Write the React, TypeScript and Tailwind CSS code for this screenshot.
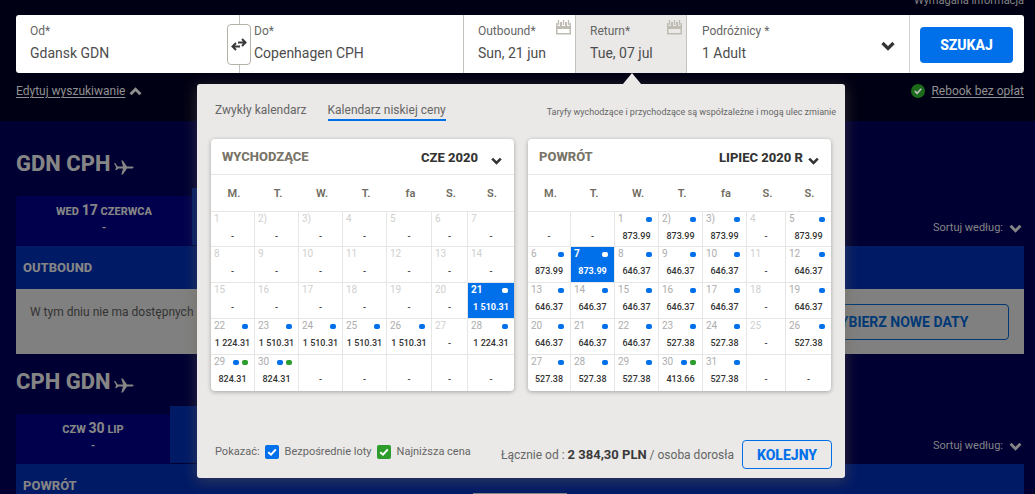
import React from "react";

type Day = { day?: string; price?: string; direct?: boolean; lowest?: boolean; selected?: boolean };

const d = (day: string, price: string): Day => ({ day, price, direct: true });
const n = (day: string): Day => ({ day });
const blank: Day = {};

const outboundWeeks: Day[][] = [
  [n("1"), n("2)"), n("3)"), n("4"), n("5"), n("6"), n("7")],
  [n("8"), n("9"), n("10"), n("11"), n("12"), n("13"), n("14")],
  [n("15"), n("16"), n("17"), n("18"), n("19"), n("20"), { ...d("21", "1 510.31"), selected: true }],
  [d("22", "1 224.31"), d("23", "1 510.31"), d("24", "1 510.31"), d("25", "1 510.31"), d("26", "1 510.31"), n("27"), d("28", "1 224.31")],
  [{ ...d("29", "824.31"), lowest: true }, { ...d("30", "824.31"), lowest: true }, blank, blank, blank, blank, blank],
];

const returnWeeks: Day[][] = [
  [blank, blank, d("1", "873.99"), d("2)", "873.99"), d("3)", "873.99"), n("4"), d("5", "873.99")],
  [d("6", "873.99"), { ...d("7", "873.99"), selected: true }, d("8", "646.37"), d("9", "646.37"), d("10", "646.37"), n("11"), d("12", "646.37")],
  [d("13", "646.37"), d("14", "646.37"), d("15", "646.37"), d("16", "646.37"), d("17", "646.37"), n("18"), d("19", "646.37")],
  [d("20", "646.37"), d("21", "646.37"), d("22", "646.37"), d("23", "527.38"), d("24", "527.38"), n("25"), d("26", "527.38")],
  [d("27", "527.38"), d("28", "527.38"), d("29", "527.38"), { ...d("30", "413.66"), lowest: true }, d("31", "527.38"), blank, blank],
];

const weekdays = ["M.", "T.", "W.", "T.", "fa", "S.", "S."];

function Chevron({ className = "", up = false }: { className?: string; up?: boolean }) {
  return (
    <svg viewBox="0 0 14 10" className={className} fill="none" stroke="currentColor" strokeWidth="3.2" aria-hidden="true">
      <path d={up ? "M1.5 8 7 2.6 12.5 8" : "M1.5 2 7 7.4 12.5 2"} />
    </svg>
  );
}

function Check({ className = "" }: { className?: string }) {
  return (
    <svg viewBox="0 0 14 14" className={className} fill="none" stroke="currentColor" strokeWidth="2" aria-hidden="true">
      <path d="M3.2 7.2 6 9.6 10.8 4.4" />
    </svg>
  );
}

function CalendarIcon() {
  return (
    <svg viewBox="0 0 15 15" className="absolute top-[5px] right-1 size-[15px]" aria-hidden="true">
      <path fill="#bfbcb4" d="M0 3h1.500v3.500h12V3H15v11.500H0zM1.500 9v4h12V9z" fillRule="evenodd" />
      <path fill="#bfbcb4" d="M1.800 0h1.400v5H1.800zM6.800 0h1.400v5H6.800zM11.800 0h1.400v5h-1.400zM4 2h2v4H4zM9 2h2v4H9zM0 6h15v3H0z" />
    </svg>
  );
}

function Plane() {
  return (
    <svg viewBox="0 0 20 15" className="h-[15px] w-5" fill="currentColor" aria-hidden="true">
      <path d="M0 3h1.300L3.600 6.400H9L7.300.4h1.500l4.200 6H17.500c1.200 0 2 .4 2 1s-.8 1-2 1H13l-4.200 6H7.300L9 8.400H4.500L2.600 10H1.200l.9-2.800z" />
    </svg>
  );
}

function SwapIcon() {
  return (
    <svg viewBox="0 0 16 13" className="h-[13px] w-4" fill="none" stroke="#3a3a3a" strokeWidth="2" aria-hidden="true">
      <path d="M7 4.500h7.500M11 1l3.500 3.500L11 8M9 8.500H1.500M5 5 1.500 8.500 5 12" />
    </svg>
  );
}

function Field({ id, label, value }: { id: string; label: string; value: string }) {
  return (
    <>
      <label htmlFor={id} className="text-xs leading-4 text-[#666]">{label}</label>
      <input id={id} defaultValue={value} className="mt-1 w-full min-w-0 bg-transparent text-sm leading-5 text-[#4d4d4d] outline-none" />
    </>
  );
}

function SearchBar() {
  return (
    <form className="relative grid h-[58px] grid-cols-[224fr_224fr_112fr_111fr_223fr_114fr] rounded-[3px] bg-white" onSubmit={(e) => e.preventDefault()}>
      <div className="relative flex flex-col border-r border-[#c4c2bd] py-2 pr-4 pl-3.5">
        <Field id="from" label="Od*" value="Gdansk GDN" />
        <button type="button" aria-label="Zamień" className="absolute top-[9px] -right-3 z-10 grid h-[41px] w-6 place-items-center rounded-[4px] border border-[#b5b2aa] bg-white">
          <SwapIcon />
        </button>
      </div>
      <div className="flex flex-col border-r border-[#c4c2bd] py-2 pl-3.5">
        <Field id="to" label="Do*" value="Copenhagen CPH" />
      </div>
      <div className="relative flex flex-col border-r border-[#c4c2bd] py-2 pl-3.5">
        <Field id="outbound" label="Outbound*" value="Sun, 21 jun" />
        <CalendarIcon />
      </div>
      <div className="relative flex flex-col border-r border-[#c4c2bd] bg-[#eae9e7] py-2 pl-3.5">
        <Field id="return" label="Return*" value="Tue, 07 jul" />
        <CalendarIcon />
      </div>
      <div className="relative flex flex-col border-r border-[#d4d2ce] py-2 pl-[15px]">
        <label htmlFor="pax" className="text-xs leading-4 text-[#666]">Podróżnicy *</label>
        <select id="pax" className="mt-1 appearance-none bg-transparent text-sm leading-5 text-[#4d4d4d] outline-none">
          <option>1 Adult</option>
        </select>
        <Chevron className="pointer-events-none absolute top-[26px] right-3.5 h-[10px] w-3.5 text-[#333]" />
      </div>
      <div className="flex items-center pt-0.5 pr-[11px] pl-[10px]">
        <button className="h-9 w-full rounded-[4px] bg-[#0070ea] text-sm font-extrabold text-white">SZUKAJ</button>
      </div>
    </form>
  );
}

function DayCell({ cell }: { cell: Day }) {
  const { day, price, direct, lowest, selected } = cell;
  const dayColor = selected ? "text-white font-bold" : direct ? "text-[#adadad]" : "text-[#cfcfcf]";
  return (
    <td className={`border-t border-r border-[#e6e6e6] p-0 align-top last:border-r-0 ${selected ? "bg-[#0070ea]" : ""}`}>
      <div className="flex h-3.5 items-center gap-[3px] pr-1.5 pl-[3px]">
        <span className={`mr-auto text-[10px] leading-3 ${dayColor}`}>{day}</span>
        {direct && <span className={`h-[5px] w-1.5 rounded-[2px] ${selected ? "bg-white" : "bg-[#0070ea]"}`} />}
        {lowest && <span className="h-[5px] w-1.5 rounded-[2px] bg-[#2d9d2d]" />}
      </div>
      <div className={`mt-[3px] text-center text-[9px] leading-[14px] whitespace-nowrap ${selected ? "font-bold text-white" : "font-medium text-[#333]"}`}>
        {price ?? "-"}
      </div>
    </td>
  );
}

type MonthProps = { title: string; month: string; weeks: Day[][]; cols: number[]; selectPad: string };

function Month({ title, month, weeks, cols, selectPad }: MonthProps) {
  const total = cols.reduce((a, b) => a + b, 0);
  return (
    <section className="min-w-0 flex-1 overflow-hidden rounded-[4px] bg-white shadow-[0_1px_4px_rgba(0,0,0,0.3)]">
      <header className="flex h-[35px] items-center justify-between pr-3 pl-[11px]">
        <h3 className="text-[13px] leading-4 font-extrabold text-[#787468]">{title}</h3>
        <div className="relative">
          <select aria-label={title} className={`appearance-none bg-transparent text-[13px] leading-4 font-extrabold text-[#333] outline-none ${selectPad}`}>
            <option>{month}</option>
          </select>
          <Chevron className="pointer-events-none absolute right-0 bottom-1 h-2 w-[11px] text-[#333]" />
        </div>
      </header>
      <table className="w-full table-fixed border-separate border-spacing-0">
        <colgroup>
          {cols.map((c, i) => (
            <col key={i} style={{ width: `${(c / total) * 100}%` }} />
          ))}
        </colgroup>
        <thead>
          <tr className="h-[37px]">
            {weekdays.map((w, i) => (
              <th key={i} scope="col" className="border-t border-[#e6e6e6] p-0 pt-0.5 pl-0.5 text-[11px] leading-4 font-semibold text-[#706c62]">{w}</th>
            ))}
          </tr>
        </thead>
        <tbody>
          {weeks.map((week, i) => (
            <tr key={i} className="h-9 first:h-[35px] last:h-[37px]">
              {week.map((cell, j) => (
                <DayCell key={j} cell={cell} />
              ))}
            </tr>
          ))}
        </tbody>
      </table>
    </section>
  );
}

function Filter({ label, color }: { label: string; color: string }) {
  return (
    <label className="flex items-center gap-1.5 text-[11px] leading-4">
      <span className="grid size-3.5 text-white">
        <input type="checkbox" defaultChecked className={`col-start-1 row-start-1 size-3.5 appearance-none rounded-[2px] ${color}`} />
        <Check className="pointer-events-none col-start-1 row-start-1 size-3.5" />
      </span>
      {label}
    </label>
  );
}

function CalendarPopover() {
  return (
    <div className="absolute top-[69px] left-[181px] z-20 flex h-[394px] w-[648px] flex-col rounded-[3px] bg-[#eae9e7] text-[#666] shadow-[0_3px_14px_1px_rgba(110,100,80,0.4)]">
      <svg viewBox="0 0 18 11" className="absolute -top-[11px] left-[426px] h-[11px] w-[18px]" aria-hidden="true">
        <path d="M9 0 18 11H0z" fill="#eae9e7" />
      </svg>
      <div className="flex h-[55px] items-center pr-[9px] pl-[18px]">
        <nav className="flex gap-[21px] text-xs leading-4">
          <a href="#zwykly" className="pb-px">Zwykły kalendarz</a>
          <a href="#niska-cena" className="border-b-2 border-[#0070ea] pb-px">Kalendarz niskiej ceny</a>
        </nav>
        <p className="ml-auto text-[9px] leading-4">Taryfy wychodzące i przychodzące są współzależne i mogą ulec zmianie</p>
      </div>
      <div className="flex gap-3.5 px-3.5">
        <Month title="WYCHODZĄCE" month="CZE 2020" weeks={outboundWeeks} cols={[44, 44, 44, 44, 45, 36, 46]} selectPad="pr-6" />
        <Month title="POWRÓT" month="LIPIEC 2020 R" weeks={returnWeeks} cols={[43, 44, 44, 44, 44, 39, 45]} selectPad="pr-4" />
      </div>
      <footer className="mt-auto flex items-center pr-[13px] pb-[9px] pl-[18px]">
        <div className="flex items-center gap-[5px] pb-1.5">
          <span className="text-[11px] leading-4">Pokazać:</span>
          <Filter label="Bezpośrednie loty" color="bg-[#0070ea]" />
          <Filter label="Najniższa cena" color="bg-[#2d9d2d]" />
        </div>
        <p className="ml-auto text-xs leading-4">
          Łącznie od : <strong className="text-[13px] font-bold text-[#3a3a3a]">2 384,30 PLN</strong> / osoba dorosła
        </p>
        <button className="ml-2 h-[29px] w-[90px] rounded-[4px] border border-[#0070ea] text-sm font-extrabold text-[#0070ea]">KOLEJNY</button>
      </footer>
    </div>
  );
}

type FlightProps = {
  route: string;
  weekday: string;
  date: string;
  month: string;
  title: string;
  tabWidth: string;
  children?: React.ReactNode;
};

function Flight({ route, weekday, date, month, title, tabWidth, children }: FlightProps) {
  return (
    <section className="text-[#858585]">
      <h2 className="flex h-[26px] items-center gap-1 text-[22px] leading-[26px] font-extrabold">
        {route}
        <span className="pt-1.5"><Plane /></span>
      </h2>
      <div className="mt-[11px] flex items-end">
        <button className={`${tabWidth} h-[50px] rounded-t-[3px] bg-[#00004d] pb-1 text-[11px] leading-4 font-extrabold`}>
          {weekday} <span className="text-sm leading-4">{date}</span> {month}
          <br />-
        </button>
        <div className="mb-px h-[57px] w-44 bg-[#001a66]" />
        <button className="mb-2.5 ml-auto flex items-center gap-1.5 text-[11px] leading-4">
          Sortuj według: <Chevron className="mr-0.5 h-[9px] w-[13px]" />
        </button>
      </div>
      <div className="flex h-[43px] items-center bg-[#001a66] pl-[7px] text-[13px] font-extrabold">{title}</div>
      {children}
    </section>
  );
}

export default function App() {
  return (
    <div className="relative h-screen overflow-hidden bg-[#000033] font-['Roboto','Noto_Sans',sans-serif]">
      <div className="h-[121px] bg-[#000014] pr-[11px] pl-4">
        <p className="flex h-[15px] items-end justify-end pb-1.5 text-[11px] leading-4 text-[#858585]">Wymagana informacja</p>
        <div className="relative">
          <SearchBar />
          <CalendarPopover />
        </div>
        <div className="flex justify-between pt-[10px] text-xs leading-4 text-[#909090]">
          <a href="#edytuj" className="flex items-center gap-1">
            <span className="underline underline-offset-2">Edytuj wyszukiwanie</span>
            <Chevron up className="h-[9px] w-[13px]" />
          </a>
          <a href="#rebook" className="flex items-center gap-1.5">
            <span className="grid size-3.5 place-items-center rounded-full bg-[#1b6b1b] text-[#bbb]"><Check className="size-3" /></span>
            <span className="underline underline-offset-2">Rebook bez opłat</span>
          </a>
        </div>
      </div>
      <main className="flex flex-col gap-[15px] pt-[30px] pr-[11px] pl-4">
        <Flight route="GDN CPH" weekday="WED" date="17" month="CZERWCA" title="OUTBOUND" tabWidth="w-44">
          <div className="flex h-[65px] items-center justify-between bg-[#808080] pr-[15px] pl-3.5">
            <p className="pb-5 text-xs leading-4 text-[#333]">W tym dniu nie ma dostępnych lotów</p>
            <button className="h-9 w-[222px] rounded-[4px] border border-[#003875] text-sm font-bold text-[#003875]">WYBIERZ NOWE DATY</button>
          </div>
        </Flight>
        <Flight route="CPH GDN" weekday="CZW" date="30" month="LIP" title="POWRÓT" tabWidth="w-[154px]" />
      </main>
      <div className="absolute bottom-0 left-[473px] h-px w-[94px] bg-[#858585]" />
    </div>
  );
}
